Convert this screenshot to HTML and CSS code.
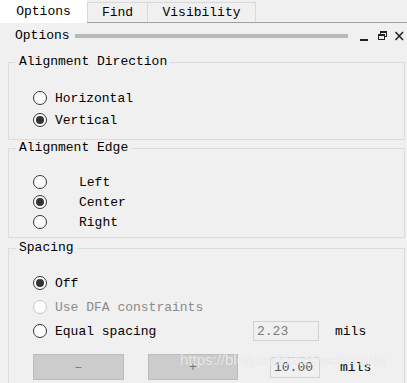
FILE: index.html
```html
<!DOCTYPE html>
<html lang="en">
<head>
  <meta charset="UTF-8">
  <title>Options</title>
  <link rel="stylesheet" href="styles.css">
</head>
<body>
  <div class="tabs">
    <div class="tab active">Options</div>
    <div class="tab tab-find">Find</div>
    <div class="tab tab-vis">Visibility</div>
  </div>

  <div class="titlebar">
    <span>Options</span>
    <span class="grip"></span>
    <svg class="win-icons" width="46" height="12" viewBox="0 0 46 12">
      <rect x="1" y="9" width="8" height="2" fill="#222"></rect>
      <rect x="21.5" y="1.5" width="6" height="5" fill="none" stroke="#222" stroke-width="1"></rect>
      <rect x="21.5" y="1.5" width="6" height="1.5" fill="#222"></rect>
      <rect x="19.5" y="4.5" width="6" height="5" fill="#f0f0f0" stroke="#222" stroke-width="1"></rect>
      <rect x="19.5" y="4.5" width="6" height="1.5" fill="#222"></rect>
      <path d="M36.5 2 L44 10 M44 2 L36.5 10" stroke="#222" stroke-width="1.5" fill="none"></path>
    </svg>
  </div>

  <fieldset class="group group-dir">
    <legend>Alignment Direction</legend>
    <div class="row"><span class="radio"></span><span class="label">Horizontal</span></div>
    <div class="row"><span class="radio checked"></span><span class="label">Vertical</span></div>
  </fieldset>

  <fieldset class="group group-edge">
    <legend>Alignment Edge</legend>
    <div class="row"><span class="radio"></span><span class="label wide">Left</span></div>
    <div class="row"><span class="radio checked"></span><span class="label wide">Center</span></div>
    <div class="row"><span class="radio"></span><span class="label wide">Right</span></div>
  </fieldset>

  <fieldset class="group group-spacing">
    <legend>Spacing</legend>
    <div class="row tall"><span class="radio checked"></span><span class="label">Off</span></div>
    <div class="row tall disabled"><span class="radio"></span><span class="label">Use DFA constraints</span></div>
    <div class="row tall">
      <span class="radio"></span>
      <span class="label fixed">Equal spacing</span>
      <span class="input input-gap">2.23</span>
      <span class="unit">mils</span>
    </div>
    <div class="btn-row">
      <span class="btn">–</span>
      <span class="btn btn-plus">+</span>
      <span class="input input-step">10.00</span>
      <span class="unit unit-step">mils</span>
    </div>
  </fieldset>

  <div class="watermark">https://blog.csdn.net/weifengdq</div>
</body>
</html>
```

FILE: styles.css
```css
body {
  margin: 0;
  width: 407px;
  height: 383px;
  overflow: hidden;
  position: relative;
  background: #f0f0f0;
  color: #000;
  font-family: "Liberation Mono", "DejaVu Sans Mono", monospace;
  font-size: 13px;
}
.tabs {
  display: flex;
  align-items: flex-start;
  height: 22px;
  border-bottom: 1px solid #a0a0a0;
}
.tab {
  box-sizing: border-box;
  height: 20px;
  margin-top: 2px;
  border: 1px solid #d9d9d9;
  border-bottom: none;
  display: flex;
  align-items: center;
  justify-content: center;
}
.tab.active {
  width: 87px;
  height: 23px;
  margin-top: 0;
  border: none;
  background: #fff;
  padding-bottom: 1px;
}
.tab-find {
  width: 61px;
}
.tab-vis {
  width: 108px;
  border-left: none;
}
.titlebar {
  display: flex;
  align-items: center;
  height: 24px;
  padding: 0 2px 0 15px;
}
.grip {
  width: 273px;
  height: 4px;
  margin-left: 5px;
  margin-top: 1px;
  background: #b9b9b9;
}
.win-icons {
  margin-left: auto;
  margin-top: 2px;
}
.group {
  margin: 0 2px 0 8px;
  border: 1px solid #dcdcdc;
  padding: 0 0 0 24px;
  min-width: 0;
}
.group legend {
  padding: 0 3px;
  margin-left: -17px;
  line-height: 16px;
}
.group-dir {
  margin-top: 7px;
  padding-top: 17px;
  padding-bottom: 8px;
}
.group-edge {
  padding-top: 16px;
  padding-bottom: 5px;
}
.group-spacing {
  margin-top: 2px;
  padding-top: 15px;
  padding-bottom: 20px;
}
.row {
  display: flex;
  align-items: center;
  height: 22px;
}
.group-edge .row {
  height: 20px;
}
.row.tall {
  height: 24px;
}
.radio {
  box-sizing: border-box;
  flex: none;
  width: 14px;
  height: 14px;
  border: 1px solid #333;
  border-radius: 50%;
  background: #fff;
  display: flex;
  align-items: center;
  justify-content: center;
}
.radio.checked::after {
  content: "";
  width: 8px;
  height: 8px;
  border-radius: 50%;
  background: #333;
}
.label {
  margin-left: 8px;
}
.label.wide {
  margin-left: 32px;
}
.label.fixed {
  flex: none;
  width: 198px;
}
.disabled .radio {
  border-color: #c8c8c8;
}
.disabled .label {
  color: #8a8a8a;
}
.input {
  box-sizing: border-box;
  display: flex;
  align-items: center;
  padding-left: 3px;
  border: 1px solid #d2d2d2;
  color: #7a7a7a;
}
.input-gap {
  width: 66px;
  height: 20px;
}
.unit {
  margin-left: 16px;
}
.btn-row {
  display: flex;
  align-items: center;
  margin-top: 11px;
  height: 26px;
}
.btn {
  box-sizing: border-box;
  width: 91px;
  height: 26px;
  border: 1px solid #bcbcbc;
  background: #cccccc;
  color: #777;
  display: flex;
  align-items: center;
  justify-content: center;
}
.btn-plus {
  width: 90px;
  margin-left: 24px;
}
.input-step {
  width: 50px;
  height: 21px;
  margin-left: 32px;
  color: #555;
}
.unit-step {
  margin-left: 20px;
}
.watermark {
  position: absolute;
  left: 180px;
  top: 351px;
  font-family: "Liberation Sans", Arial, sans-serif;
  font-size: 15px;
  color: rgba(255, 255, 255, 0.75);
  text-shadow: 0 0 1px rgba(0, 0, 0, 0.15);
  white-space: nowrap;
}
```
